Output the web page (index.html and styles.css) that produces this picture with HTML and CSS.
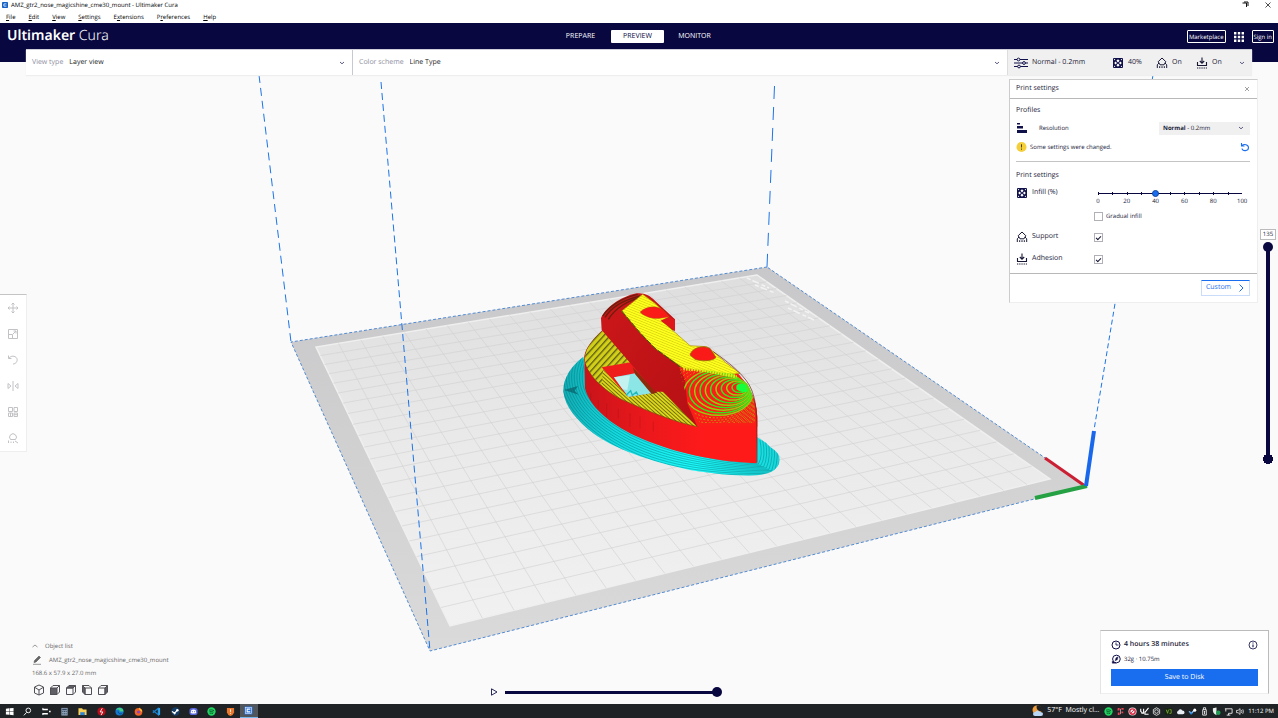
FILE: index.html
```html
<!DOCTYPE html>
<html lang="en">
<head>
<meta charset="utf-8">
<title>AMZ_gtr2_nose_magicshine_cme30_mount - Ultimaker Cura</title>
<link rel="stylesheet" href="styles.css">
</head>
<body>
<svg class="defs" aria-hidden="true">
  <symbol id="i-chev" viewBox="0 0 8 8"><path d="M2 3l2 1.800L6 3" fill="none" stroke="currentColor" stroke-width=".9"/></symbol>
  <symbol id="i-infill" viewBox="0 0 12 12"><rect x="1" y="1" width="10" height="10" rx="1" fill="#10104a"/><path d="M6 2.200L7.600 3.800 6 5.400 4.400 3.800zM6 6.600L7.600 8.200 6 9.800 4.400 8.200zM3.600 4.600L5 6 3.600 7.400 2.200 6zM8.400 4.600L9.800 6 8.400 7.400 7 6zM2 2h1.400L2 3.400zM10 2v1.400L8.600 2zM2 10V8.600L3.400 10zM10 10H8.600L10 8.600z" fill="#fff"/></symbol>
  <symbol id="i-support" viewBox="0 0 12 12"><path d="M6 1l3.800 3.700L8 7.800H4L2.200 4.700zM1.300 11V7.800L3 6M10.700 11V7.800L9 6M3.700 11V9.200M6 11V9.200M8.300 11V9.200" fill="none" stroke="currentColor" stroke-width="1"/></symbol>
  <symbol id="i-adhesion" viewBox="0 0 12 12"><path d="M6 0.500v5.500M3.800 4L6 6.200 8.200 4M1.500 5v3.500h9V5" fill="none" stroke="currentColor" stroke-width="1.100"/><path d="M1 11h10" stroke="currentColor" stroke-dasharray="1.300 .9"/></symbol>
</svg>
<div class="app">
  <header class="titlebar">
    <svg class="app-icon" viewBox="0 0 8 8"><rect width="8" height="8" rx="1" fill="#1762c4"/><path d="M6 2.500H2.500v3H6" fill="none" stroke="#fff"/></svg>
    <h1>AMZ_gtr2_nose_magicshine_cme30_mount - Ultimaker Cura</h1>
    <button class="win" aria-label="Restore"><svg viewBox="0 0 8 8"><path d="M1.500 2h4v4M3 1h4v4" fill="none" stroke="#111"/></svg></button>
    <button class="win" aria-label="Close"><svg viewBox="0 0 8 8"><path d="M1.500 1.500l5 5M6.500 1.500l-5 5" stroke="#222" stroke-width=".8"/></svg></button>
  </header>
  <nav class="menubar" aria-label="Menu">
    <button><u>F</u>ile</button><button><u>E</u>dit</button><button><u>V</u>iew</button><button><u>S</u>ettings</button><button>E<u>x</u>tensions</button><button>P<u>r</u>eferences</button><button><u>H</u>elp</button>
  </nav>
  <div class="topbar">
    <div class="brand"><b>Ultimaker</b> Cura</div>
    <nav class="stages"><button>PREPARE</button><button class="on">PREVIEW</button><button>MONITOR</button></nav>
    <div class="account">
      <button class="outline">Marketplace</button>
      <button class="apps" aria-label="Applications"><svg viewBox="0 0 10 10" fill="#fff"><path d="M0 0h2.400v2.400H0zM3.800 0h2.400v2.400H3.800zM7.600 0H10v2.400H7.600zM0 3.800h2.400v2.400H0zM3.800 3.800h2.400v2.400H3.800zM7.600 3.800H10v2.400H7.600zM0 7.600h2.400V10H0zM3.800 7.600h2.400V10H3.800zM7.600 7.600H10V10H7.600z"/></svg></button>
      <button class="outline">Sign in</button>
    </div>
  </div>

  <main class="workspace">
    <svg class="scene" viewBox="0 62 1278 642" preserveAspectRatio="xMidYMid slice" role="img" aria-label="Sliced model on the build plate">
      <defs>
        <linearGradient id="plate" x1="0" y1="0" x2="0" y2="1"><stop offset="0" stop-color="#dedede"/><stop offset=".5" stop-color="#eaeaea"/><stop offset="1" stop-color="#f1f1f1"/></linearGradient>
        <linearGradient id="edge" x1="0" y1="0" x2="0" y2="1"><stop offset="0" stop-color="#c8c8ca"/><stop offset="1" stop-color="#dadada"/></linearGradient>
        <linearGradient id="side" x1="0" y1="0" x2="1" y2="1"><stop offset="0" stop-color="#cc171a"/><stop offset="1" stop-color="#b51014"/></linearGradient>
        <linearGradient id="hull" x1="0" y1="0" x2="1" y2="0"><stop offset="0" stop-color="#c8141a"/><stop offset=".35" stop-color="#ea181c"/><stop offset=".7" stop-color="#ff1a1a"/></linearGradient>
        <linearGradient id="brim" x1="0" y1="0" x2="1" y2="0"><stop offset="0" stop-color="#12a9b1"/><stop offset=".25" stop-color="#13dbe0"/><stop offset=".6" stop-color="#1cfafa"/><stop offset="1" stop-color="#17d6da"/></linearGradient>
        <pattern id="deck" width="14" height="14" patternUnits="userSpaceOnUse" patternTransform="rotate(-48)"><rect width="14" height="14" fill="#d2cf18"/><rect width="14" height="4" fill="#5d5b12"/></pattern>
        <pattern id="deck2" width="8" height="8" patternUnits="userSpaceOnUse" patternTransform="rotate(42)"><rect width="8" height="8" fill="#dcd718"/><rect width="8" height="2.500" fill="#6b670f"/></pattern>
        <pattern id="top" width="7" height="7" patternUnits="userSpaceOnUse" patternTransform="rotate(22)"><rect width="7" height="7" fill="#ffff1c"/><rect width="7" height="1.500" fill="#c9c210"/></pattern>
        <clipPath id="brimclip"><path d="M130 230C90 260 68 300 70 335C75 380 110 420 160 460C220 505 330 545 450 570C540 585 640 592 670 583C710 575 722 555 718 530C712 510 690 505 680 490L650 470 400 400 140 300z"/></clipPath>
        <clipPath id="dome"><path d="M415 256L430 262 580 282 620 310C640 340 648 380 645 430L480 430 445 370z"/></clipPath>
      </defs>
      <path d="M767 267L291 342 430 651 1086 486z" fill="url(#edge)"/>
      <path d="M757 275L316 347 450 626 1050 479z" fill="url(#plate)" stroke="#efefef" stroke-width="1.500"/>
      <g id="grid" fill="none" stroke="#d0d0d1" stroke-width=".6"></g>
      <g stroke="#f2f2f2" stroke-width="1.500" stroke-dasharray="4 2 7 3"><path d="M747 278l22 10M755 285l20 8M785 301l24 12M788 308l26 12"/></g>
      <path d="M767 267L291 342 430 651 1086 486z" fill="none" stroke="#4280cf" stroke-width=".9" stroke-dasharray="3 2"/>
      <g fill="none" stroke="#1b74e8" stroke-width="1">
        <path d="M259 75L291 342" stroke-dasharray="8 5"/>
        <path d="M381 82L430 651" stroke-dasharray="7 4"/>
        <path d="M774.500 86L767 267" stroke-dasharray="13 8"/>
        <path d="M1153 75L1094 430" stroke-dasharray="5 3"/>
      </g>
      <g stroke-linecap="butt"><path d="M1045 458L1085 486" stroke="#cb2034" stroke-width="3"/><path d="M1035 498L1087 486" stroke="#25a043" stroke-width="4"/><path d="M1094 431L1086 486" stroke="#1968ec" stroke-width="4"/></g>
      <g transform="translate(540 280) scale(.3333)">
        <g clip-path="url(#brimclip)"><rect x="60" y="220" width="670" height="380" fill="url(#brim)"/><g id="brimlines" fill="none" stroke="#086f78" stroke-width="1.500" stroke-opacity=".85"></g></g>
        <path d="M72 330l42-12-10 14 12 12z" fill="#0a5e66" opacity=".7"/>
        <path d="M190 148C150 185 130 215 133 240L135 325C150 380 200 422 270 460C360 505 500 545 650 550L652 410C650 350 620 300 560 250L405 200z" fill="url(#hull)"/>
        <path d="M152 340v20M175 360v25M200 370v40M235 385v30M270 400v40M300 410v35M340 425v30" stroke="#9e1014" stroke-width="1.500" opacity=".6"/>
        <path d="M190 150C150 185 133 215 135 242C145 290 200 340 260 365C330 395 400 425 472 440L370 335 300 250z" fill="url(#deck2)" stroke="#6e4b08" stroke-width="2"/>
        <path d="M190 150C150 185 133 215 135 242C138 262 155 290 185 315L190 262 275 245z" fill="url(#deck)"/>
        <path d="M185 262L277 246 300 270 350 336 265 351z" fill="#ef1c1c"/>
        <path d="M222 292L285 280 335 340 265 351z" fill="#8ce6e6"/>
        <path d="M222 292L270 286 262 330 248 328z" fill="#c4f2ee"/><path d="M278 262L352 338 335 342 285 282z" fill="#8b2d0b"/>
        <path d="M258 346l14-14 5 14 12-10 5 9" fill="none" stroke="#21b8bb" stroke-width="4"/>
        <path d="M183 115C195 85 240 50 290 40C312 37 330 46 345 62L405 118 405 152 390 150 455 205 430 262 440 300 472 440 370 335 345 335 185 150z" fill="url(#side)"/>
        <path d="M415 256L435 300 442 370 472 440 652 440V410C650 350 620 300 560 250z" fill="#fc1d19"/>
        <path d="M188 108C205 82 245 53 293 43M195 112C215 80 250 60 300 48M205 118C225 85 265 60 305 52" fill="none" stroke="#49210a" stroke-width="4" opacity=".75"/>
        <path d="M308 43L245 93 300 158 345 205 420 258 430 264 565 284 600 280 560 250 520 215 500 200 450 197 365 122 388 112 345 70z" fill="url(#top)" stroke="#a88b06" stroke-width="2"/>
        <path d="M300 96C320 78 350 74 372 92L388 111 360 115C335 118 310 108 300 96z" fill="#fa1b18" stroke="#8a6a06"/>
        <path d="M362 122L388 110 405 120V152z" fill="#df1719"/>
        <path d="M450 225C455 205 485 193 510 205L528 232C520 244 485 245 465 238z" fill="#fa1b18" stroke="#8a6a06" stroke-width="2"/>
        <path d="M245 93L300 158 345 205 425 264" fill="none" stroke="#3c520c" stroke-width="3" stroke-dasharray="18 5"/>
        <g clip-path="url(#dome)"><g id="rings" fill="none"></g></g>
        <path d="M430 266L500 272 590 290" fill="none" stroke="#e6ea14" stroke-width="10" stroke-dasharray="5 3"/>
        <path d="M590 315q18-10 30 2l3 17q-18 8-34-6z" fill="#16ff3c"/>
        <path d="M520 215C570 250 620 290 635 330C650 370 652 400 651 548" fill="none" stroke="#6d160f" stroke-width="2"/>
      </g>
    </svg>

    <div class="stagebar">
      <div class="seg seg-view"><label for="view">View type</label><select id="view"><option>Layer view</option></select><svg class="chev"><use href="#i-chev"/></svg></div>
      <div class="seg seg-color"><label for="color">Color scheme</label><select id="color"><option>Line Type</option></select><svg class="chev"><use href="#i-chev"/></svg></div>
      <button class="seg seg-profile">
        <svg class="ico tune" viewBox="0 0 14 12"><path d="M0 2.500h14M0 6h14M0 9.500h14" stroke="#10104a" stroke-width="1.200"/><g fill="#f0f0f0" stroke="#10104a"><circle cx="4.500" cy="2.500" r="1.400"/><circle cx="10" cy="6" r="1.400"/><circle cx="5" cy="9.500" r="1.400"/></g></svg>
        <span class="grow">Normal - 0.2mm</span>
        <span class="stat"><svg class="ico"><use href="#i-infill"/></svg>40%</span>
        <span class="stat"><svg class="ico"><use href="#i-support"/></svg>On</span>
        <span class="stat"><svg class="ico"><use href="#i-adhesion"/></svg>On</span>
        <svg class="chev"><use href="#i-chev"/></svg>
      </button>
    </div>

    <div class="tools">
      <button aria-label="Move"><svg viewBox="0 0 12 12"><path d="M6 1v10M1 6h10M4.500 2.500L6 1l1.500 1.500M4.500 9.500L6 11l1.500-1.500M2.500 4.500L1 6l1.500 1.500M9.500 4.500L11 6 9.500 7.500"/></svg></button>
      <button aria-label="Scale"><svg viewBox="0 0 12 12"><path d="M1.500 1.500h9v9h-9zM1.500 6.500h4v4M6 6l3-3M6.500 3H9v2.500"/></svg></button>
      <button aria-label="Rotate"><svg viewBox="0 0 12 12"><path d="M1.500 1.500v3h3M1.800 4.200C4 1.500 8 1.500 9.800 4.200C11 7 9 10 6 10"/></svg></button>
      <button aria-label="Mirror"><svg viewBox="0 0 12 12"><path d="M6 1v10M1 3.500v5L4 6zM11 3.500v5L8 6z"/></svg></button>
      <button aria-label="Per model settings"><svg viewBox="0 0 12 12"><path d="M1.500 1.500h4v4h-4zM7 1.500h3.500v4H7zM1.500 7h4v3.500h-4zM7 7h3.500v3.500H7zM7 8.700h3.500M3.500 7v3.500"/></svg></button>
      <button aria-label="Support blocker"><svg viewBox="0 0 12 12"><path d="M3.500 7.500a3.400 3.400 0 1 1 5 0zM1.500 11V8.500M4 11V9.500M6.500 11V9.500M8 9l3 2"/></svg></button>
    </div>

    <section class="panel" aria-label="Print settings">
      <div class="panel-head"><h2>Print settings</h2><button aria-label="Close panel"><svg viewBox="0 0 6 6"><path d="M1 1l4 4M5 1L1 5" stroke="#888" stroke-width=".8"/></svg></button></div>
      <div class="panel-body">
        <h3>Profiles</h3>
        <div class="row res">
          <svg class="ico" viewBox="0 0 12 12"><path d="M1 1h3v1.500H1zM1 4h6v2.500H1zM1 8h10v3H1z" fill="#10104a"/></svg>
          <label for="res">Resolution</label>
          <div class="combo"><select id="res"><option>Normal - 0.2mm</option></select><span class="combo-text" aria-hidden="true"><b>Normal</b> - 0.2mm</span><svg class="chev"><use href="#i-chev"/></svg></div>
        </div>
        <div class="row warn">
          <svg class="ico" viewBox="0 0 12 12"><circle cx="6" cy="6" r="5.500" fill="#f5cf3a"/><path d="M6 3v3.500M6 7.700v1.300" stroke="#333"/></svg>
          <span>Some settings were changed.</span>
          <button aria-label="Reset"><svg viewBox="0 0 10 10"><path d="M1.500 1v3h3M1.800 3.700C4 1.500 8.500 2.500 8.500 5.800C8.300 9.500 2.500 9.500 2 6.500" fill="none" stroke="#196ef0" stroke-width="1.100"/></svg></button>
        </div>
        <hr>
        <h3>Print settings</h3>
        <div class="row field">
          <svg class="ico"><use href="#i-infill"/></svg><label for="infill">Infill (%)</label>
          <input id="infill" type="range" min="0" max="100" value="40">
        </div>
        <div class="scale" aria-hidden="true"><span>0</span><span>20</span><span>40</span><span>60</span><span>80</span><span>100</span></div>
        <div class="gradual"><input id="grad" type="checkbox"><label for="grad">Gradual infill</label></div>
        <div class="row field tall"><svg class="ico"><use href="#i-support"/></svg><label for="sup">Support</label><input id="sup" type="checkbox" checked></div>
        <div class="row field tall"><svg class="ico"><use href="#i-adhesion"/></svg><label for="adh">Adhesion</label><input id="adh" type="checkbox" checked></div>
      </div>
      <div class="panel-foot"><button>Custom<svg viewBox="0 0 8 8"><path d="M2.500 .5L6 4 2.500 7.500" fill="none" stroke="#196ef0"/></svg></button></div>
    </section>

    <div class="layers">
      <output for="layer">135</output>
      <input id="layer" type="range" min="0" max="135" value="135" aria-label="Layer">
    </div>

    <section class="objects">
      <button class="obj-toggle"><svg viewBox="0 0 8 8"><path d="M1.500 5L4 3l2.500 2" fill="none" stroke="#999"/></svg>Object list</button>
      <div class="obj-name"><svg viewBox="0 0 10 10"><path d="M1 9.300h8M2 7.500l.5-2L7 1l1.500 1.500L4 7z" fill="#666" stroke="#555" stroke-width=".6"/></svg>AMZ_gtr2_nose_magicshine_cme30_mount</div>
      <p>168.6 x 57.9 x 27.0 mm</p>
      <div class="views">
        <button aria-label="3D view"><svg viewBox="0 0 12 12"><path d="M6 1l4.500 2v6L6 11 1.500 9V3zM2 3.500L6 6l4-2.500M6 6v5"/></svg></button>
        <button aria-label="Front view"><svg viewBox="0 0 12 12"><path d="M1.500 4L4 1.500h6.500V8L8 10.500H1.500zM8 4l2.500-2.500"/><path class="f" d="M1.500 4H8v6.500H1.500z"/></svg></button>
        <button aria-label="Top view"><svg viewBox="0 0 12 12"><path d="M1.500 4H8v6.500H1.500zM8 10.500L10.500 8V1.500"/><path class="f" d="M1.500 4L4 1.500h6.500L8 4z"/></svg></button>
        <button aria-label="Left view"><svg viewBox="0 0 12 12"><path d="M4 4h6.500v6.500H4zM1.500 1.500H8L10.500 4"/><path class="f" d="M1.500 1.500L4 4v6.500L1.500 8z"/></svg></button>
        <button aria-label="Right view"><svg viewBox="0 0 12 12"><path d="M1.500 4H8v6.500H1.500zM1.500 4L4 1.500h6.500"/><path class="f" d="M8 4l2.500-2.500V8L8 10.500z"/></svg></button>
      </div>
    </section>

    <div class="player">
      <button aria-label="Play"><svg viewBox="0 0 8 8"><path d="M1.500 .8L7 4 1.500 7.200z" fill="none" stroke="#10104a" stroke-width=".9"/></svg></button>
      <input type="range" min="0" max="100" value="100" aria-label="Path position">
    </div>

    <section class="job">
      <div class="row"><svg class="ico" viewBox="0 0 12 12"><circle cx="6" cy="6" r="4.800" fill="none" stroke="#10104a" stroke-width="1.200"/><path d="M6 3v3h3" fill="none" stroke="#10104a"/></svg><b>4 hours 38 minutes</b><button aria-label="Details"><svg class="ico" viewBox="0 0 12 12"><circle cx="6" cy="6" r="4.800" fill="none" stroke="#10104a"/><path d="M6 5.300v3.500M6 3v1.300" stroke="#10104a" stroke-width="1.300"/></svg></button></div>
      <div class="row small"><svg class="ico" viewBox="0 0 12 12"><circle cx="6.500" cy="6" r="4.600" fill="none" stroke="#10104a" stroke-width="1.200"/><path d="M1.500 8.500V11h5M5 8l1-3.500 2.500-1L7.500 7z" fill="#10104a" stroke="#10104a" stroke-width=".5"/></svg><span>32g · 10.75m</span></div>
      <button class="save">Save to Disk</button>
    </section>
  </main>

  <footer class="taskbar">
    <div class="pins">
      <button aria-label="Start"><svg viewBox="0 0 10 10"><path d="M1 2l3.700-.6v3.400H1zM5.200 1.300L9.500 1v3.800H5.200zM1 5.300h3.700v3.400L1 8.200zM5.200 5.300h4.300v4l-4.300-.6z" fill="#fff"/></svg></button>
      <button aria-label="Search"><svg viewBox="0 0 10 10"><path d="M4 6L1 9.300M8.500 3.800a2.600 2.600 0 1 1-5.200 0a2.600 2.600 0 1 1 5.200 0" fill="none" stroke="#fff"/></svg></button>
      <button aria-label="Task view"><svg viewBox="0 0 10 10"><path d="M.5 2.800h6M.5 7.500h6M7.800 5h1.800" fill="none" stroke="#fff" stroke-width="1.700"/><path d="M1 1v2M1 7v2" stroke="#fff"/></svg></button>
      <button aria-label="Calculator"><svg viewBox="0 0 10 10"><path d="M1.500 1h7v8.500h-7z" fill="#8da0b5"/><path d="M2.500 2h5v1.500h-5z" fill="#30465e"/><path d="M2.500 5h5M2.500 7.500h5" stroke="#30465e" stroke-dasharray="1.200 .7"/></svg></button>
      <button aria-label="Files"><svg viewBox="0 0 10 10"><path d="M.5 1.500h4l1 1.200h4V9h-9z" fill="#f8cf57"/><path d="M2.500 5.800h5V9h-5z" fill="#2f83d6"/></svg></button>
      <button aria-label="Flash tool"><svg viewBox="0 0 10 10"><circle cx="5" cy="5" r="4.500" fill="#b90e19"/><path d="M5.800 1.500L3.500 5.500h3L4.500 9" fill="none" stroke="#fff"/></svg></button>
      <button aria-label="Edge"><svg viewBox="0 0 10 10"><circle cx="5" cy="5" r="4.500" fill="#1579cf"/><path d="M1 3.500C3-.8 9.500.5 9.400 5H5C6 3 3 2 1 3.500z" fill="#45cf82"/><path d="M3.500 5c0 2 2 3 4 2.500" stroke="#0a4387" fill="none"/></svg></button>
      <button aria-label="Firefox"><svg viewBox="0 0 10 10"><circle cx="5" cy="5.300" r="4.300" fill="#f26422"/><path d="M5.500 0c0 2 4 2 3.500 5.500L6 3z" fill="#ffc83d"/><circle cx="5" cy="5.500" r="1.700" fill="#8645c6"/></svg></button>
      <button aria-label="Code"><svg viewBox="0 0 10 10"><path d="M7 1.500v7L1 4M7 1.500L1 6.500" fill="none" stroke="#1680cd" stroke-width="1.400"/><path d="M7 .5l2 1v7l-2 1z" fill="#31a5ee"/></svg></button>
      <button aria-label="Steam"><svg viewBox="0 0 10 10"><circle cx="5" cy="5" r="4.600" fill="#143e67"/><path d="M1 5l3 1.700L7 3.700" stroke="#fff" stroke-width="1.300" fill="none"/><circle cx="7" cy="3.500" r="1.400" fill="#fff"/><circle cx="4" cy="7" r="1.200" fill="#fff"/></svg></button>
      <button aria-label="Discord"><svg viewBox="0 0 10 10"><rect x=".5" y="1" width="9" height="8" rx="3" fill="#5966dc"/><path d="M2.500 3.500q2.500-1.200 5 0l.6 3.200-1.600.6H3.500l-1.600-.6z" fill="#fff"/><path d="M3.800 4.600v1.200M6.200 4.600v1.200" stroke="#5966dc"/></svg></button>
      <button aria-label="Spotify"><svg viewBox="0 0 10 10"><use href="#spot"/></svg></button>
      <button aria-label="Shield"><svg viewBox="0 0 10 10"><path d="M1 1h8v5q-1 3-4 4-3-1-4-4z" fill="#ec782c"/><path d="M5 2.500v3M5 6.500v1.200" stroke="#fff"/></svg></button>
      <button class="active" aria-label="Cura"><svg viewBox="0 0 10 10"><rect x=".5" y=".5" width="9" height="9" rx="1" fill="#2a70d6"/><rect x="1.500" y="1.500" width="7" height="7" fill="none" stroke="#dfeaff" stroke-width=".7"/><path d="M7 3.500H3.500v3H7" fill="none" stroke="#fff" stroke-width="1.200"/></svg></button>
    </div>
    <div class="tray">
      <svg class="weather" viewBox="0 0 12 12"><circle cx="5" cy="5" r="4.500" fill="#f2a03d"/><path d="M5 .5a4 4 0 0 0 5 5.500A4.500 4.500 0 0 0 5 .5z" fill="#202326"/><path d="M3 11a2 2 0 0 1 0-4q3-3 5 0 3 0 3 2t-2 2z" fill="#b9d7f5"/></svg>
      <span class="temp">57°F&nbsp; Mostly cl...</span>
      <svg viewBox="0 0 10 10"><g id="spot"><circle cx="5" cy="5" r="4.600" fill="#1ed760"/><path d="M2.300 3.500q3-1 5.500.5M2.700 5.300q2.500-.7 4.500.4M3 7q2-.5 3.700.3" stroke="#12351e" fill="none" stroke-width=".8"/></g></svg>
      <svg viewBox="0 0 10 10"><path d="M2 1h2v3H1.500zM6 1h2.500v2H6zM2 6h2v3H2zM6 5h2v2H6z" fill="#ef4054"/><path d="M5 2v6" stroke="#fff" stroke-width=".6"/></svg>
      <svg viewBox="0 0 10 10"><circle cx="5" cy="5" r="4.500" fill="#e8e8e8"/><circle cx="5" cy="5" r="3" fill="none" stroke="#dc2742" stroke-width="1.500"/><path d="M3 7l4-4" stroke="#dc2742"/></svg>
      <svg viewBox="0 0 10 10"><path d="M.8 2v3l2 1.500M4 2v5H1.500M9.500 1L5.500 6M9.500 8h-4V5" stroke="#fff" stroke-width="1.200" fill="none"/></svg>
      <svg viewBox="0 0 10 10" fill="none" stroke="#ddd"><path d="M5 .8l3.500 2v4.500L5 9.300 1.500 7.300V2.800z"/><circle cx="5" cy="5" r="2"/></svg>
      <svg viewBox="0 0 10 10"><rect x="1" y="1.500" width="8" height="7" fill="#15240e"/><path d="M2.500 3l1.500 4 1-4M6 3h2v4H6" stroke="#78a63a" fill="none"/></svg>
      <svg viewBox="0 0 10 10"><path d="M2.500 8a2 2 0 0 1 0-3.800Q5 1 7 4q2.500 0 2.500 2t-2 2z" fill="#e9eef5"/></svg>
      <svg viewBox="0 0 10 10"><path d="M1 5l3 1.700L7 3.700" stroke="#8fc7fa" stroke-width="1.500" fill="none"/><circle cx="7.500" cy="3.500" r="1.700" fill="#fff"/><circle cx="3.500" cy="7" r="1.300" fill="#2485df"/></svg>
      <svg viewBox="0 0 10 10"><path d="M3 3h4v6H3zM3.800 3V.8h2.400V3M4.300 5h1.500M5 5v3" fill="none" stroke="#fff" stroke-width=".9"/></svg>
      <svg viewBox="0 0 10 10"><path d="M1 1.500l4-1v8.800Q1 7.500 1 4z" fill="#e6eee9"/><circle cx="7" cy="6.500" r="2.500" fill="#1f9d55"/></svg>
      <svg viewBox="0 0 10 10"><path d="M1 2h8v5H5M2 2v3M3 9h4M5 7v2" stroke="#fff" fill="none" stroke-width=".9"/></svg>
      <svg viewBox="0 0 10 10"><path d="M.5 3.800h1.800L4.500 1.800v6.500L2.300 6.300H.5z" fill="none" stroke="#fff" stroke-width=".8"/><path d="M6 3.500q1 1.500 0 3M7.500 2.500q1.500 2.500 0 5" fill="none" stroke="#fff" stroke-width=".8"/></svg>
      <time>11:12 PM</time>
    </div>
  </footer>
</div>
<script src="scene.js"></script>
</body>
</html>
```

FILE: styles.css
```css
* { box-sizing: border-box; }
body { margin: 0; height: 100vh; overflow: hidden; font: 7px/10px "Open Sans", "Noto Sans", sans-serif; text-rendering: geometricPrecision; color: #191937; background: #fafafa; }
button, select, input { font: inherit; color: inherit; margin: 0; text-rendering: inherit; }
button { border: 0; padding: 0; background: none; display: flex; align-items: center; justify-content: center; }
h1, h2, h3, p { margin: 0; font-size: inherit; font-weight: 400; }
svg { display: block; flex: none; }
.defs { position: absolute; width: 0; height: 0; }
.app { height: 100vh; display: flex; flex-direction: column; }
.ico { width: 12px; height: 12px; }
.chev { width: 8px; height: 8px; color: #4b4b78; }

.titlebar { height: 10px; display: flex; align-items: center; background: #fff; color: #000; padding: 0 6px 0 2px; }
.titlebar h1 { flex: 1; margin-left: 3px; font-size: 6px; line-height: 8px; }
.app-icon { width: 6px; height: 6px; }
.win { width: 8px; margin-left: 15px; }
.win svg { width: 8px; height: 8px; }
.menubar { height: 13px; display: flex; align-items: center; gap: 13px; background: #fff; padding-left: 6px; font-size: 6px; line-height: 8px; color: #000; }

.topbar { height: 39px; background: #08073f; color: #fff; display: grid; grid-template-columns: 1fr auto 1fr; align-items: start; padding: 7px 4px 0 7px; }
.brand { font-family: "Noto Sans", sans-serif; font-size: 14px; line-height: 12px; font-weight: 300; }
.brand b { font-weight: 600; }
.stages { display: flex; gap: 4px; margin-right: 6px; }
.stages button { width: 53px; height: 13px; border-radius: 1px; }
.stages .on { background: #fff; color: #08073f; }
.account { display: flex; justify-content: flex-end; align-items: center; gap: 8px; font-size: 6px; }
.outline { height: 13px; border: 1px solid #fff; border-radius: 1px; padding: 0 1px; }
.apps svg { width: 10px; height: 10px; }

.workspace { flex: 1; min-height: 0; position: relative; }
.scene { position: absolute; width: 100%; height: 100%; }

.stagebar { position: absolute; top: -13px; left: 26px; right: 26px; height: 26px; display: grid; grid-template-columns: 327fr 654fr 245fr; background: #fff; border-top: 1px solid #cfcfda; box-shadow: 0 1px 1px #eee; }
.seg { display: flex; align-items: center; padding: 0 6px; min-width: 0; }
.seg label { color: #8d8da0; margin-right: 6px; white-space: nowrap; }
.seg select { flex: 1; min-width: 0; border: 0; appearance: none; background: none; padding: 0; color: #191919; }
.seg-view { border-right: 1px solid #c8c8d0; }
.seg-profile { background: #f0f0f0; border-left: 1px solid #ddd; justify-content: flex-start; text-align: left; }
.seg-profile .chev { margin-left: 6px; }
.tune { width: 14px; margin-right: 4px; }
.grow { flex: 1; }
.stat { display: flex; align-items: center; gap: 4px; margin-left: 4px; min-width: 36px; }
.stat:nth-of-type(2) { min-width: 40px; }

.tools { position: absolute; left: 0; top: 232px; width: 27px; background: #fff; border: 1px solid #ddd; border-left: 0; border-color: #c4c4c4 #eee #eee; }
.tools button { width: 25px; height: 26px; }
.tools svg { width: 12px; height: 12px; fill: none; stroke: #c2c2c6; stroke-width: 1px; }

.panel { position: absolute; top: 17px; right: 20px; width: 249px; background: #fff; border: 1px solid #ccc; border-right-color: #eee; border-bottom-color: #eee; }
.panel-head { height: 19px; display: flex; align-items: center; justify-content: space-between; padding: 0 7px 0 6px; border-bottom: 1px solid #b8b8b8; }
.panel-head svg { width: 6px; height: 6px; }
.panel-body { padding: 6px 7px 8px 6px; }
.panel-body h3 { line-height: 12px; }
.row { display: flex; align-items: center; }
.res { height: 14px; margin-top: 4px; font-size: 6px; }
.res label { flex: 1; margin-left: 11px; }
.combo { position: relative; width: 91px; height: 13px; background: #f0f0f0; display: flex; align-items: center; padding: 0 5px 0 4px; }
.combo select { position: absolute; inset: 0; width: 100%; opacity: 0; }
.combo-text { flex: 1; }
.warn { height: 12px; margin-top: 6px; font-size: 6px; }
.warn span { flex: 1; margin-left: 3px; }
.warn .ico { width: 11px; }
.warn button svg { width: 10px; height: 10px; }
hr { border: 0; border-top: 1px solid #c4c4c4; margin: 8px 0; }
.field { display: grid; grid-template-columns: 12px 66px 1fr; height: 12px; margin-top: 5px; }
.field label { padding-left: 4px; }
.tall { margin-top: 10px; }
input[type=checkbox] { appearance: none; width: 9px; height: 9px; border: 1px solid #b0b0b8; background: #fff; display: grid; place-items: center; }
input[type=checkbox]:checked::after { content: ""; width: 4px; height: 2px; border: solid #191937; border-width: 0 0 1px 1px; transform: rotate(-45deg); }
input[type=range] { appearance: none; background: none; }
#infill { height: 8px; margin: 0 5px 0 1px; background: repeating-linear-gradient(90deg, #08073f 0 1px, transparent 1px 10%) 3px 50% / calc(100% - 6px) 3px no-repeat, linear-gradient(#08073f, #08073f) 50% 50% / calc(100% - 6px) 1px no-repeat; }
#infill::-webkit-slider-thumb { appearance: none; width: 7px; height: 7px; border-radius: 50%; background: #196ef0; border: 1px solid #10459c; }
.scale { display: flex; justify-content: space-between; margin: -1px 3px 0 77px; font-size: 6px; line-height: 6px; }
.scale span { width: 10px; text-align: center; }
.gradual { display: flex; align-items: center; gap: 3px; margin: 7px 0 0 78px; height: 10px; font-size: 6px; }
.panel-foot { border-top: 1px solid #b8b8b8; padding: 6px 7px; display: flex; justify-content: flex-end; }
.panel-foot button { width: 49px; height: 16px; border: 1px solid #c9dcfa; border-top-color: #196ef0; color: #196ef0; gap: 6px; }
.panel-foot svg { width: 8px; height: 8px; }

.layers { position: absolute; top: 167px; right: 2px; width: 16px; display: flex; flex-direction: column; align-items: center; gap: 2px; font-size: 6px; }
.layers output { width: 16px; border: 1px solid #bbb; background: #fff; text-align: center; line-height: 9px; }
.layers input { writing-mode: vertical-lr; direction: rtl; width: 10px; height: 222px; background: radial-gradient(circle, #08073f 5px, transparent 5px) 50% 100% / 10px 10px no-repeat, linear-gradient(#08073f, #08073f) 50% 50% / 4px calc(100% - 8px) no-repeat; }
.layers input::-webkit-slider-thumb, .player input::-webkit-slider-thumb { appearance: none; width: 10px; height: 10px; border-radius: 50%; background: #08073f; }

.objects { position: absolute; left: 31px; bottom: 8px; color: #666; font-size: 6px; display: flex; flex-direction: column; align-items: flex-start; }
.obj-toggle { gap: 6px; height: 12px; }
.obj-toggle svg { width: 8px; height: 8px; }
.obj-name { display: flex; align-items: center; gap: 7px; height: 16px; margin-left: 1px; }
.obj-name svg { width: 10px; height: 10px; }
.objects p { margin: 0 0 6px 1px; }
.views { display: flex; gap: 4px; margin-left: 2px; }
.views svg { width: 12px; height: 12px; fill: none; stroke: #4f4f55; stroke-width: 1px; }
.views .f { fill: #5f5f65; }

.player { position: absolute; left: 38%; width: 236px; bottom: 7px; display: flex; align-items: center; gap: 7px; padding-left: 4px; }
.player svg { width: 8px; height: 8px; }
.player input { flex: 1; min-width: 0; height: 10px; background: linear-gradient(#08073f, #08073f) 0 50% / calc(100% - 4px) 3px no-repeat; }

.job { position: absolute; right: 9px; bottom: 10px; width: 169px; background: #fff; border: 1px solid #ccc; border-color: #bbb #bbb #eee #e4e4e4; padding: 7px 10px; }
.job .row { height: 14px; gap: 3px; }
.job b { flex: 1; font-weight: 600; }
.job .ico { width: 10px; height: 10px; }
.job .small { font-size: 6px; }
.save { width: 100%; height: 17px; margin-top: 3px; background: #196ef0; color: #fff; }

.taskbar { height: 14px; background: #202326; color: #fff; display: flex; justify-content: space-between; }
.pins { width: 258px; display: grid; grid-template-columns: repeat(14, 1fr); }
.pins svg { width: 9px; height: 9px; }
.pins .active { background: #50565c; border-bottom: 1px solid #75b7ef; }
.tray { display: flex; align-items: center; gap: 3px; padding-right: 4px; }
.tray svg { width: 9px; height: 9px; }
.tray .weather { width: 12px; height: 12px; }
.temp { width: 52px; margin-right: 2px; white-space: nowrap; }
.tray time { font-size: 6px; }
```

FILE: scene.js
```js
const NS = "http://www.w3.org/2000/svg";
function add(parent, tag, attrs) {
  const el = document.createElementNS(NS, tag);
  for (const k in attrs) el.setAttribute(k, attrs[k]);
  document.getElementById(parent).appendChild(el);
}

// Projective map from the unit square to the build plate
function projector([p0, p1, p2, p3]) {
  const sx = p0[0] - p1[0] + p2[0] - p3[0], sy = p0[1] - p1[1] + p2[1] - p3[1];
  const dx1 = p1[0] - p2[0], dx2 = p3[0] - p2[0], dy1 = p1[1] - p2[1], dy2 = p3[1] - p2[1];
  const det = dx1 * dy2 - dx2 * dy1;
  const g = (sx * dy2 - dx2 * sy) / det, h = (dx1 * sy - sx * dy1) / det;
  const a = p1[0] - p0[0] + g * p1[0], b = p3[0] - p0[0] + h * p3[0];
  const d = p1[1] - p0[1] + g * p1[1], e = p3[1] - p0[1] + h * p3[1];
  return (u, v) => {
    const w = g * u + h * v + 1;
    return ((a * u + b * v + p0[0]) / w).toFixed(1) + " " + ((d * u + e * v + p0[1]) / w).toFixed(1);
  };
}
const at = projector([[757, 275], [316, 347], [450, 626], [1050, 479]]);
const cells = 22;
for (let i = 1; i < cells; i++) {
  const t = i / cells;
  add("grid", "path", { d: `M${at(t, 0)}L${at(t, 1)}M${at(0, t)}L${at(1, t)}` });
}

// Brim passes, each one slightly further out from the hull
for (let i = 0; i < 11; i++) {
  const k = i * 8;
  add("brimlines", "path", { d: `M${140 - k} ${235}C${100 - k} 320 ${150 - k} ${390 + k * .6} 270 ${456 + k}C380 ${510 + k} 520 ${545 + k * .7} ${655 + k} ${552 + k * .5}Q${670 + k} 530 ${660 + k} 480` });
}

// Layer contours on the curved nose
for (let i = 0; i < 26; i++) {
  const lower = i > 10;
  add("rings", "ellipse", {
    cx: 606 - i * 7, cy: 321 + i * 1.6, rx: 14 + i * 9, ry: 9 + i * 6,
    stroke: lower ? "#b5a70d" : i % 2 ? "#35e51b" : "#8fd10c",
    "stroke-width": lower ? 2.5 : 4.5,
    "stroke-dasharray": lower ? "6 5" : "none"
  });
}
```
